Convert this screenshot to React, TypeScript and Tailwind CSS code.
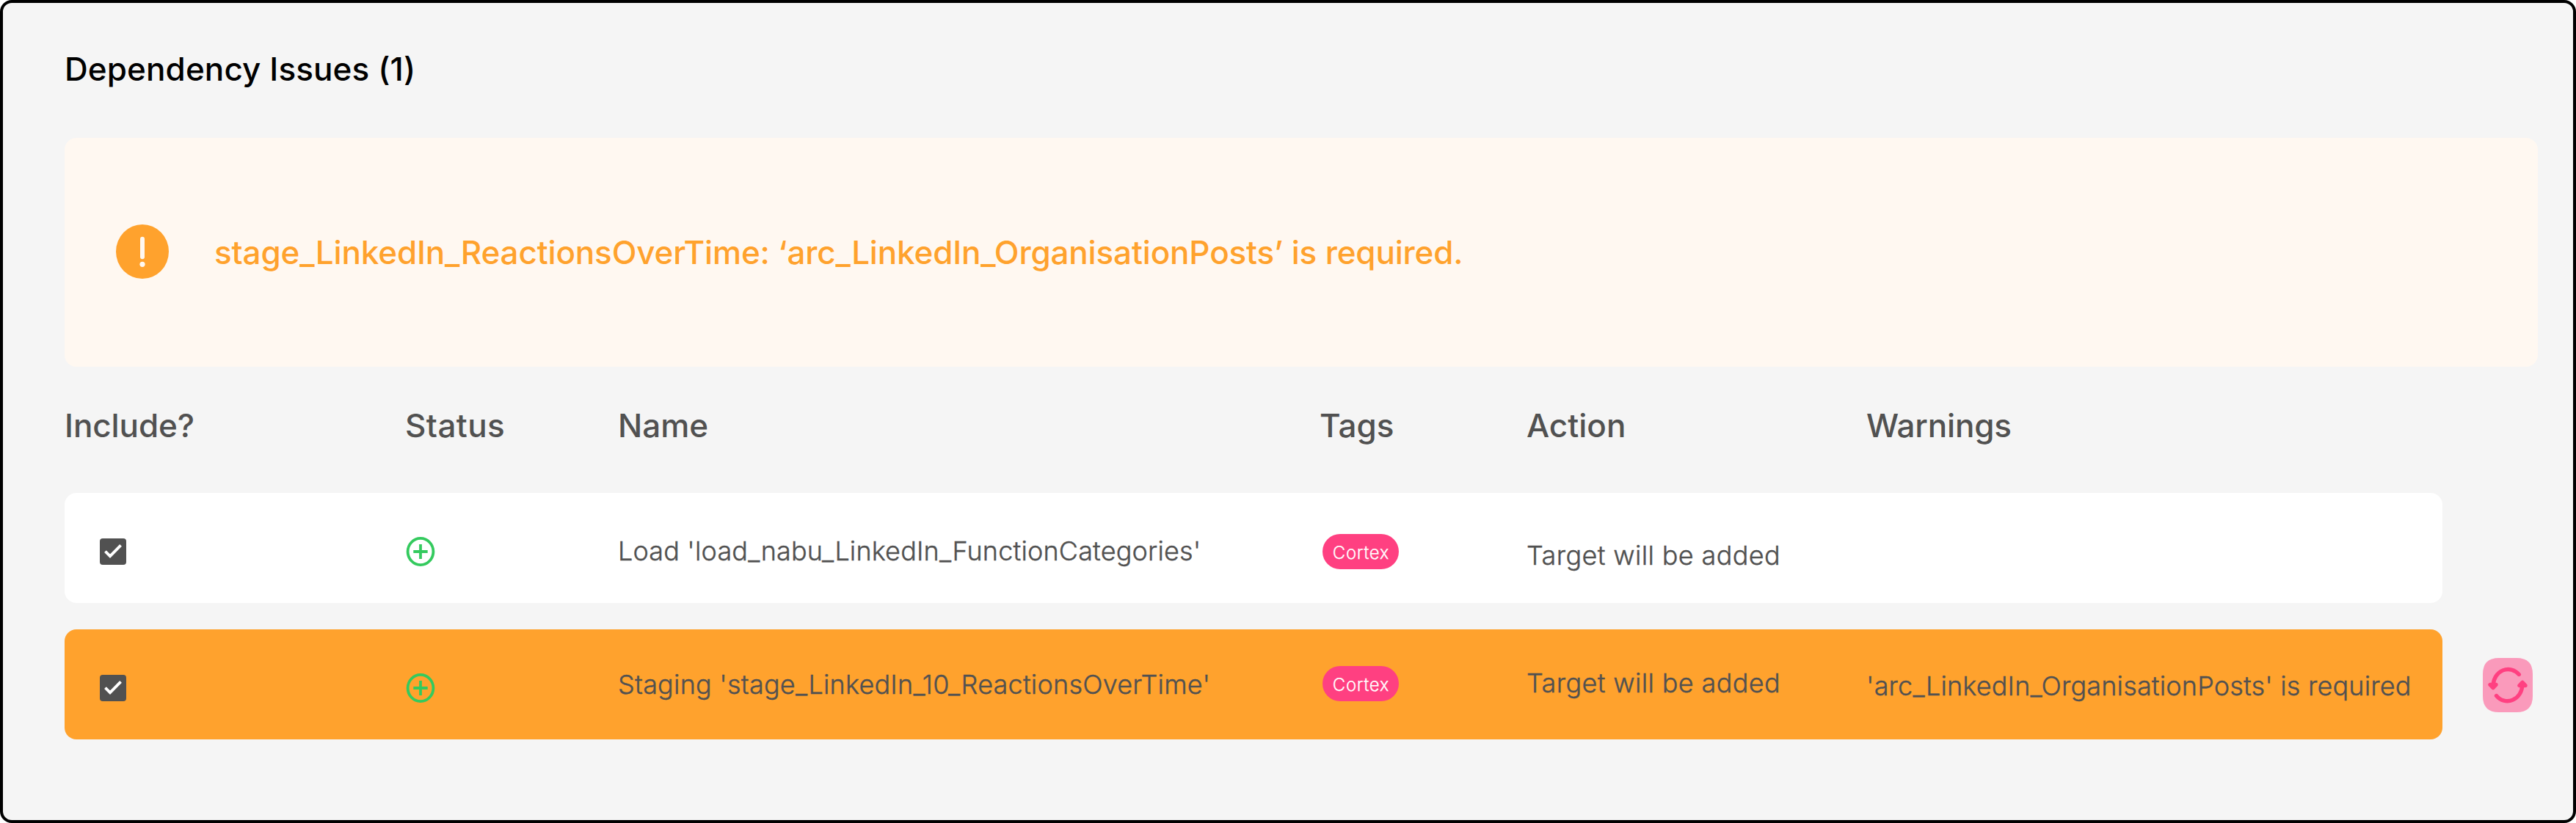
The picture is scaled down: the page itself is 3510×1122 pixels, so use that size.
import React from "react";

const columns = "grid grid-cols-[464px_290px_956px_282px_463px_auto]";
const bodyText = "text-4xl leading-[44px] font-light [-webkit-text-stroke:0.4px_#515151]";

function CheckBox() {
  return (
    <svg className="block size-9" viewBox="0 0 36 36">
      <rect width="36" height="36" rx="4" fill="#515151" />
      <path
        d="M14 26L7 19L8.8 17.2L14 22.4L27.2 9L29 10.8Z"
        fill="#fff"
        stroke="#fff"
        strokeWidth="1.4"
        strokeLinejoin="round"
      />
    </svg>
  );
}

function PlusCircle() {
  return (
    <svg className="block size-10" viewBox="0 0 40 40" fill="none" stroke="#34CA5E" strokeWidth="3.8">
      <ellipse cx="20" cy="20" rx="17.4" ry="18.1" />
      <path d="M20 10V30M10.3 20H29.7" />
    </svg>
  );
}

function AlertIcon() {
  return (
    <svg className="mb-[2px] block h-[74px] w-[72px]" viewBox="0 0 72 74">
      <ellipse cx="36" cy="37" rx="36" ry="37" fill="#FFA22D" />
      <rect x="33" y="16.8" width="6" height="30.5" rx="3" fill="#FFF8F1" />
      <circle cx="36" cy="54.3" r="3.6" fill="#FFF8F1" />
    </svg>
  );
}

function RefreshButton() {
  return (
    <button className="block h-[74px] w-[68px]" aria-label="Refresh">
      <svg className="block h-[74px] w-[68px]" viewBox="0 0 68 74">
        <path d="M0 22Q0 0 22 0H46Q68 0 68 22V52Q68 74 46 74H22Q0 74 0 52Z" fill="#FA9ABB" />
        <g fill="none" stroke="#FF4081" strokeWidth="5.4" strokeLinecap="round" strokeLinejoin="round">
          <path d="M49.3 22.5A20.3 22.3 0 0 0 14.2 37" />
          <path d="M18.5 51.5A20.3 22.3 0 0 0 53.8 37" />
          <path d="M10 36.4H18L14 40.6Z" fill="#FF4081" />
          <path d="M50 37.6H58L54 33.4Z" fill="#FF4081" />
        </g>
      </svg>
    </button>
  );
}

function Tag({ label }: { label: string }) {
  return (
    <span className="flex h-12 w-[104px] items-center justify-center rounded-3xl bg-[#FF4081] pt-1 pl-px text-2xl leading-none tracking-[0.6px] text-white [-webkit-text-stroke:0.25px_#fff]">
      {label}
    </span>
  );
}

export default function App() {
  return (
    <main className="h-[1122px] w-[3510px] rounded-2xl border-4 border-black bg-[#F5F5F5] pl-[84px] font-['Inter',sans-serif] whitespace-nowrap text-[#515151]">
      <h1 className="pt-[60px] text-[44px] leading-[60px] font-medium tracking-[0.1px] text-black">Dependency Issues (1)</h1>

      <section className="mt-16 flex h-[312px] w-[3370px] items-center rounded-2xl bg-[#FFF8F1] pl-[70px] text-[44px] leading-[60px] font-medium text-[#FFA22D]">
        <AlertIcon />
        <p className="ml-[62px] tracking-[-0.165px]">
          stage_LinkedIn_ReactionsOverTime: ‘arc_LinkedIn_OrganisationPosts’ is required.
        </p>
      </section>

      <div className={`${columns} mt-[50px] h-[122px] text-[44px] leading-[60px] font-medium`}>
        <span className="tracking-[-0.1px]">Include?</span>
        <span className="tracking-[0.4px]">Status</span>
        <span>Name</span>
        <span>Tags</span>
        <span>Action</span>
        <span className="tracking-[-0.2px]">Warnings</span>
      </div>

      <div className={`${columns} ${bodyText} h-[150px] w-[3240px] rounded-2xl bg-white`}>
        <div className="pt-[62px] pl-12"><CheckBox /></div>
        <div className="pt-[60px] pl-px"><PlusCircle /></div>
        <div className="pt-[57px] tracking-[0.155px]">Load 'load_nabu_LinkedIn_FunctionCategories'</div>
        <div className="pt-14 pl-1"><Tag label="Cortex" /></div>
        <div className="pt-[63px] tracking-[0.36px]">Target will be added</div>
        <div />
      </div>

      <div className="mt-9 flex">
        <div className={`${columns} ${bodyText} h-[150px] w-[3240px] rounded-2xl bg-[#FFA22D]`}>
          <div className="pt-[62px] pl-12"><CheckBox /></div>
          <div className="pt-[60px] pl-px"><PlusCircle /></div>
          <div className="pt-[53px] tracking-[0.21px]">Staging 'stage_LinkedIn_10_ReactionsOverTime'</div>
          <div className="pt-[50px] pl-1"><Tag label="Cortex" /></div>
          <div className="pt-[51px] tracking-[0.36px]">Target will be added</div>
          <div className="pt-[55px] tracking-[0.17px]">'arc_LinkedIn_OrganisationPosts' is required</div>
        </div>
        <div className="pt-[39px] pl-[55px]"><RefreshButton /></div>
      </div>
    </main>
  );
}
